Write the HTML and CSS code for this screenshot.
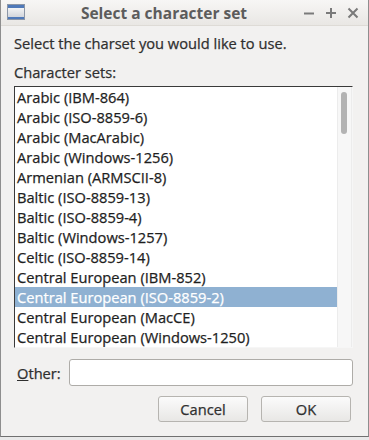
FILE: index.html
```html
<!DOCTYPE html>
<html>
<head>
<meta charset="utf-8">
<link rel="stylesheet" href="styles.css">
</head>
<body>
<div class="window">
  <div class="titlebar">
    <svg class="winicon" width="18" height="16" viewBox="0 0 18 16">
      <defs>
        <linearGradient id="g" x1="0" y1="0" x2="0" y2="1">
          <stop offset="0" stop-color="#ffffff"/>
          <stop offset="1" stop-color="#c9cdd4"/>
        </linearGradient>
      </defs>
      <rect x="0.5" y="0.5" width="17" height="15" fill="url(#g)" stroke="#8c96a6"/>
      <rect x="1" y="1" width="16" height="3" fill="#4f79b9"/>
      <rect x="1" y="13" width="16" height="2" fill="#4f79b9"/>
    </svg>
    <div class="title">Select a character set</div>
    <div class="controls">
      <svg width="12" height="12" viewBox="0 0 12 12"><path d="M1 6.5h10" stroke="#7a7a7a" stroke-width="2"/></svg>
      <svg width="12" height="12" viewBox="0 0 12 12"><path d="M1 6h10M6 1v10" stroke="#7a7a7a" stroke-width="2"/></svg>
      <svg width="12" height="12" viewBox="0 0 12 12"><path d="M1.5 1.5l9 9M10.5 1.5l-9 9" stroke="#7a7a7a" stroke-width="2"/></svg>
    </div>
  </div>
  <div class="content">
    <div class="prompt">Select the charset you would like to use.</div>
    <div class="label">Character sets:</div>
    <div class="listbox">
      <div class="rows">
        <div class="row">Arabic (IBM-864)</div>
        <div class="row">Arabic (ISO-8859-6)</div>
        <div class="row">Arabic (MacArabic)</div>
        <div class="row">Arabic (Windows-1256)</div>
        <div class="row">Armenian (ARMSCII-8)</div>
        <div class="row">Baltic (ISO-8859-13)</div>
        <div class="row">Baltic (ISO-8859-4)</div>
        <div class="row">Baltic (Windows-1257)</div>
        <div class="row">Celtic (ISO-8859-14)</div>
        <div class="row">Central European (IBM-852)</div>
        <div class="row selected">Central European (ISO-8859-2)</div>
        <div class="row">Central European (MacCE)</div>
        <div class="row">Central European (Windows-1250)</div>
      </div>
      <div class="scrollbar"><div class="thumb"></div></div>
    </div>
    <div class="other">
      <div class="otherlabel"><span class="u">O</span>ther:</div>
      <div class="entry"></div>
    </div>
    <div class="buttons">
      <div class="button">Cancel</div>
      <div class="button">OK</div>
    </div>
  </div>
</div>
</body>
</html>
```
FILE: styles.css
```css
html, body {
  margin: 0;
  padding: 0;
  background: #e9e9e9;
}
body {
  width: 369px;
  height: 440px;
  overflow: hidden;
  font-family: "Open Sans", "DejaVu Sans", sans-serif;
  font-size: 14.67px;
  color: #2f2f2f;
  -webkit-text-stroke: 0.25px currentColor;
}
.window {
  width: 369px;
  height: 437px;
  box-sizing: border-box;
  border-left: 1px solid #8e8e8e;
  border-right: 1px solid #8e8e8e;
  border-bottom: 1px solid #707070;
  background: #f2f1f0;
  display: flex;
  flex-direction: column;
}
.titlebar {
  height: 26px;
  box-sizing: border-box;
  border-bottom: 1px solid #dedbd6;
  background: linear-gradient(#f7f6f5, #e9e7e4);
  display: flex;
  align-items: center;
  padding: 0 9px 0 6px;
}
.winicon {
  flex: none;
  margin-top: -2px;
}
.title {
  flex: 1;
  text-align: center;
  font-weight: bold;
  color: #5c5c5c;
  font-size: 15.5px;
  -webkit-text-stroke: 0;
}
.controls {
  display: flex;
  gap: 10px;
  align-items: center;
}
.content {
  padding: 0 15px 0 13px;
  display: flex;
  flex-direction: column;
}
.prompt {
  margin-top: 8px;
  line-height: 18px;
  height: 18px;
}
.label {
  margin-top: 11px;
  line-height: 18px;
  height: 18px;
}
.listbox {
  margin-top: 5px;
  height: 262px;
  box-sizing: border-box;
  border-top: 1px solid #3a3a3a;
  border-left: 1px solid #3a3a3a;
  border-right: 1px solid #f6f6f6;
  border-bottom: 1px solid #f6f6f6;
  background: #ffffff;
  display: flex;
  overflow: hidden;
}
.rows {
  flex: 1;
  overflow: hidden;
}
.row {
  height: 20px;
  line-height: 20px;
  padding-left: 2px;
  color: #1e1e1e;
  white-space: nowrap;
}
.row.selected {
  background: #8fb1d2;
  color: #ffffff;
}
.scrollbar {
  width: 15px;
  flex: none;
  box-sizing: border-box;
  background: #f7f7f7;
  border-left: 1px solid #ececec;
  border-right: 1px solid #ececec;
  padding: 5px 0 0 3px;
}
.thumb {
  width: 6px;
  height: 42px;
  border-radius: 3px;
  background: #b3b3b3;
}
.other {
  margin-top: 11px;
  display: flex;
  align-items: center;
}
.otherlabel {
  width: 55px;
  padding-left: 3px;
  box-sizing: border-box;
}
.u {
  text-decoration: underline;
}
.entry {
  flex: 1;
  height: 27px;
  box-sizing: border-box;
  border: 1px solid #aeaca8;
  border-radius: 3px;
  background: #ffffff;
}
.buttons {
  margin-top: 10px;
  display: flex;
  justify-content: flex-end;
  gap: 13px;
  padding-right: 2px;
}
.button {
  width: 90px;
  height: 26px;
  box-sizing: border-box;
  border: 1px solid #b6b4b0;
  border-radius: 3px;
  background: linear-gradient(#fbfbfb, #e8e7e5);
  text-align: center;
  line-height: 24px;
  color: #2f2f2f;
}
```
